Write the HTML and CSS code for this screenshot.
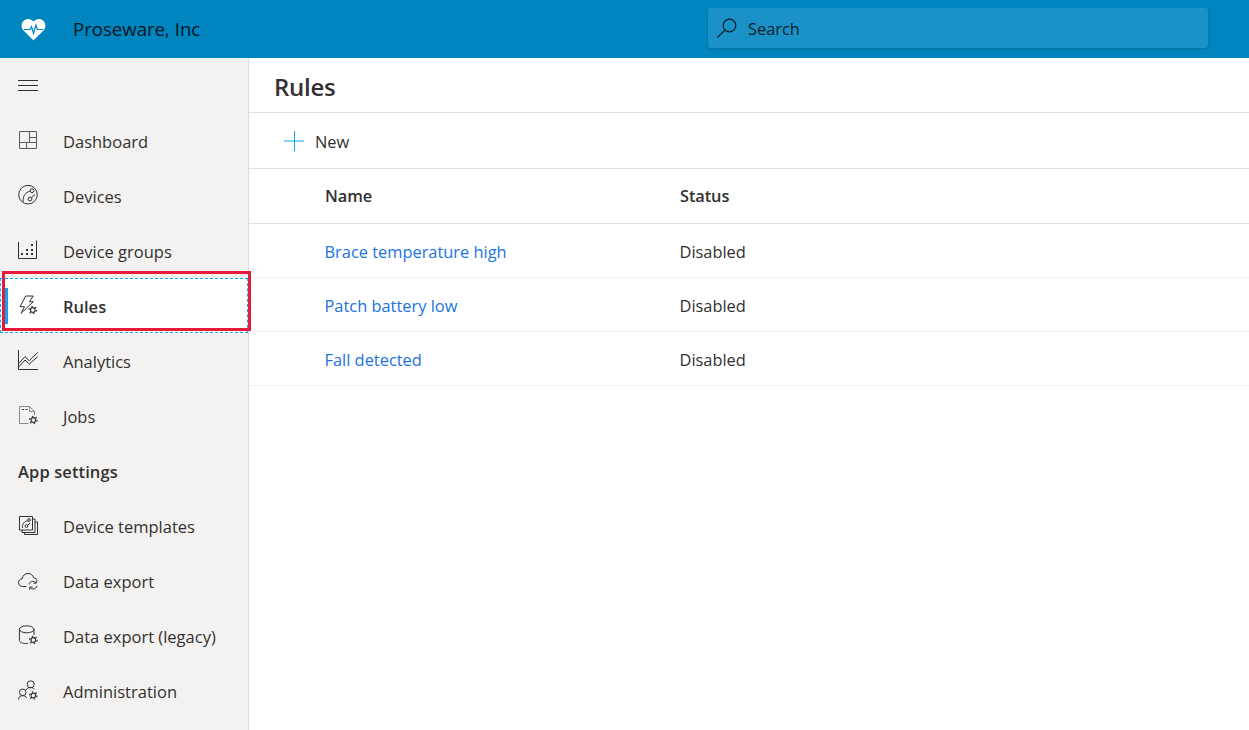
FILE: index.html
```html
<!DOCTYPE html>
<html lang="en">
<head>
  <meta charset="UTF-8">
  <meta name="viewport" content="width=device-width, initial-scale=1.0">
  <title>Rules - Proseware, Inc</title>
  <link rel="stylesheet" href="styles.css">
</head>
<body>
<svg class="defs" width="0" height="0">
  <defs>
    <g id="gear">
      <circle r="2.300" fill="none" stroke="#323130" stroke-width="1.200"/>
      <circle r="3.700" fill="none" stroke="#323130" stroke-width="1.300" stroke-dasharray="1.500 2.374"/>
    </g>
  </defs>
</svg>
<header class="topbar">
  <div class="brand">
    <svg class="brand-logo" viewBox="0 0 26 24">
      <path d="M13 23.500 2.600 13C-.4 9.800.2 5.300 2.800 2.900 5.900.1 10.600.6 13 4c2.400-3.400 7.100-3.900 10.200-1.100 2.600 2.400 3.200 6.900.2 10.100z" fill="#fff"/>
      <path d="M3 12h6.500l1.500-3 2 7 2.500-8.500 1.500 4.500h6" fill="none" stroke="#0085bf" stroke-width="1.300"/>
    </svg>
    <span class="brand-name">Proseware, Inc</span>
  </div>
  <div class="search">
    <svg class="search-icon" viewBox="0 0 20 20">
      <circle cx="12.500" cy="7.500" r="6.300" fill="none" stroke="#10222c" stroke-width="1.200"/>
      <path d="M8 12 .5 19.500" fill="none" stroke="#10222c" stroke-width="1.200"/>
    </svg>
    <span>Search</span>
  </div>
</header>

<div class="layout">
  <nav class="sidebar">
    <div class="nav-row">
      <svg class="nav-icon" viewBox="0 0 20 20"><path d="M0 5.500h20M0 10.500h20M0 15.500h20" stroke="#323130" fill="none"/></svg>
    </div>
    <a class="nav-row">
      <svg class="nav-icon" viewBox="0 0 20 20"><path d="M1.500 1.500h17v17h-17zM11.500 1.500v11M11.500 7.500h7M1.500 12.500h17M8.500 12.500v6" fill="none" stroke="#605e5c"/></svg>
      <span>Dashboard</span>
    </a>
    <a class="nav-row">
      <svg class="nav-icon" viewBox="0 0 20 20"><circle cx="10" cy="9.700" r="9.300" fill="none" stroke="#323130"/><circle cx="14" cy="5.700" r="1.900" fill="none" stroke="#323130"/><circle cx="12" cy="14" r="1.900" fill="none" stroke="#323130"/><path d="M12.200 6C7.500 7.500 4.800 10.500 5.300 16.500M13.500 12.500l3.500-3" fill="none" stroke="#323130"/></svg>
      <span>Devices</span>
    </a>
    <a class="nav-row">
      <svg class="nav-icon" viewBox="0 0 20 20"><path d="M.5 2v16.500h18V.5" fill="none" stroke="#323130"/><path d="M3 13h2v2H3zM8 13h2v2H8zM13 13h2v2h-2zM8 9h2v2H8zM13 9h2v2h-2zM13 4h2v2h-2z" fill="#323130"/></svg>
      <span>Device groups</span>
    </a>
    <a class="nav-row is-active">
      <svg class="nav-icon" viewBox="0 0 20 20"><path d="M7.700 1h7.600l-4 5.700h4L3 18.300l3.500-6.600H2z" fill="none" stroke="#323130"/><use href="#gear" x="14.800" y="15"/></svg>
      <span>Rules</span>
    </a>
    <a class="nav-row">
      <svg class="nav-icon" viewBox="0 0 20 20"><path d="M.5 0v19.500h19.500" fill="none" stroke="#323130"/><path d="M1 13.300 7 6.700l4.300 4L19.700 2.300M1 16.700 7 10l4.300 4 8.400-7.300" fill="none" stroke="#323130"/></svg>
      <span>Analytics</span>
    </a>
    <a class="nav-row">
      <svg class="nav-icon" viewBox="0 0 20 20"><path d="M10.500 18.500h-9v-17h10l5 5v3.500M11.500 1.500v5h5" fill="none" stroke="#8a8886"/><path d="M4 4.500h2M7.500 4.500h2" stroke="#323130" fill="none"/><use href="#gear" x="15.300" y="15"/></svg>
      <span>Jobs</span>
    </a>
    <div class="nav-row nav-heading">App settings</div>
    <a class="nav-row">
      <svg class="nav-icon" viewBox="0 0 20 20"><path d="M1.500 1.500h13v13.500h-13zM14.500 4H17v13.500H4V15M17 7h2.500v12.500h-13v-2" fill="none" stroke="#323130"/><circle cx="11" cy="5" r="1.400" fill="none" stroke="#323130"/><circle cx="8.500" cy="11" r="1.400" fill="none" stroke="#323130"/><path d="M10 5.500C6 6.500 4 9 4.500 13M9.800 10l2.200-2" fill="none" stroke="#323130"/></svg>
      <span>Device templates</span>
    </a>
    <a class="nav-row">
      <svg class="nav-icon" viewBox="0 0 20 20"><path d="M8.500 16.500H4.500C2 16.500.5 14.500.5 12.500S2 9 4 9c.5-3.400 3-5.500 6-5.500 2.800 0 5 1.700 5.800 4.500 1.500.2 2.900.9 3.600 2.300" fill="none" stroke="#323130"/><path d="M11 14.500c.3-2 1.900-3.200 3.800-3.200 1.300 0 2.300.5 3 1.400M19 15.800c-.3 2-1.900 3.200-3.800 3.200-1.300 0-2.300-.5-3-1.400" fill="none" stroke="#323130"/><path d="M18.300 10.500v2.700h-2.800M11.700 19.800v-2.700h2.800" fill="none" stroke="#323130"/></svg>
      <span>Data export</span>
    </a>
    <a class="nav-row">
      <svg class="nav-icon" viewBox="0 0 20 20"><ellipse cx="8.700" cy="4.300" rx="7.300" ry="3.500" fill="none" stroke="#323130"/><path d="M1.400 4.300v11.200c0 1.900 2.800 3 6.800 3h1.800M16 4.300V10" fill="none" stroke="#323130"/><use href="#gear" x="15.300" y="15"/></svg>
      <span>Data export (legacy)</span>
    </a>
    <a class="nav-row">
      <svg class="nav-icon" viewBox="0 0 20 20"><circle cx="12.700" cy="4.300" r="3.500" fill="none" stroke="#323130"/><circle cx="4.700" cy="12.300" r="3.300" fill="none" stroke="#323130"/><path d="M.5 19.500c0-2.500 1.800-3.800 4.200-3.800 2 0 3.300.8 4 2.200M8 10c.8-1.600 2.500-2.500 4.700-2.500 1.700 0 3 .6 3.800 1.800" fill="none" stroke="#323130"/><use href="#gear" x="15.300" y="15.500"/></svg>
      <span>Administration</span>
    </a>
  </nav>

  <main class="content">
    <h1 class="page-title">Rules</h1>
    <div class="toolbar">
      <button class="new-btn">
        <svg class="plus-icon" viewBox="0 0 20 20"><path d="M10.500 0v20M0 10h20" stroke="#0ea5f5" fill="none"/></svg>
        <span>New</span>
      </button>
    </div>
    <div class="table">
      <div class="table-row table-head"><span>Name</span><span>Status</span></div>
      <div class="table-row"><a>Brace temperature high</a><span>Disabled</span></div>
      <div class="table-row"><a>Patch battery low</a><span>Disabled</span></div>
      <div class="table-row"><a>Fall detected</a><span>Disabled</span></div>
    </div>
  </main>
</div>
<div class="highlight"></div>
</body>
</html>
```

FILE: styles.css
```css
body {
  font-family: "Open Sans", "Noto Sans", Arial, sans-serif;
  margin: 0;
  padding: 0;
  height: 730px;
  overflow: hidden;
  background-color: white;
  color: #323130;
  font-size: 16.4px;
}
.defs {
  position: absolute;
}
.topbar {
  height: 58px;
  background-color: #0085bf;
  position: relative;
}
.brand {
  display: flex;
  align-items: center;
  height: 58px;
  padding-left: 21px;
}
.brand-logo {
  width: 25px;
  height: 23px;
}
.brand-name {
  margin-left: 27px;
  padding-bottom: 2px;
  font-size: 18.6px;
  font-weight: 500;
  color: #03141e;
}
.search {
  position: absolute;
  left: 708px;
  top: 8px;
  width: 500px;
  height: 40px;
  display: flex;
  align-items: center;
  background-color: #1a91c7;
  border-radius: 3px;
  box-shadow: 0 1px 3px rgba(0, 0, 0, 0.2);
  color: #0b1f2a;
}
.search-icon {
  width: 20px;
  height: 20px;
  margin: 0 11px 0 9px;
}
.layout {
  display: flex;
  height: 672px;
}
.sidebar {
  width: 248px;
  background-color: #f3f2f1;
  border-right: 1px solid #dcdcdc;
  font-size: 16.5px;
}
.nav-row {
  display: flex;
  align-items: center;
  height: 55px;
  padding-left: 18px;
  box-sizing: border-box;
  color: #323130;
  position: relative;
}
.nav-row span {
  padding-top: 2px;
}
.nav-icon {
  width: 20px;
  height: 20px;
  margin-right: 25px;
  flex-shrink: 0;
  position: relative;
  top: -0.5px;
}
.nav-heading {
  padding-top: 2px;
  font-weight: 600;
  letter-spacing: 0.1px;
}
.is-active {
  background-color: white;
  font-weight: 600;
  outline: 1px dashed #0ea5f5;
  outline-offset: -1px;
}
.is-active::before {
  content: "";
  position: absolute;
  left: 5px;
  top: 10px;
  width: 3px;
  height: 36px;
  background-color: #0aa5f7;
}
.content {
  flex: 1;
}
.page-title {
  margin: 0;
  height: 54px;
  line-height: 58px;
  padding-left: 25px;
  font-size: 24px;
  font-weight: 600;
  letter-spacing: -0.25px;
  border-bottom: 1px solid #e1dfdd;
}
.toolbar {
  height: 55px;
  display: flex;
  align-items: center;
  padding-left: 35px;
  border-bottom: 1px solid #e1dfdd;
}
.new-btn {
  display: flex;
  align-items: center;
  padding: 0;
  background: none;
  border: none;
  font: inherit;
  color: #323130;
}
.new-btn span {
  padding-top: 2px;
}
.plus-icon {
  width: 20px;
  height: 20px;
  margin-right: 11px;
}
.table-row {
  display: flex;
  align-items: center;
  box-sizing: border-box;
  height: 54px;
  padding: 2px 0 0 76px;
  border-bottom: 1px solid #f3f2f1;
}
.table-row > :first-child {
  width: 355px;
}
.table-row a {
  margin-left: -0.5px;
  color: #2173e0;
}
.table-head {
  height: 55px;
  padding: 0 0 2px 76px;
  font-weight: 600;
  letter-spacing: -0.1px;
  border-bottom-color: #e1dfdd;
}
.highlight {
  position: absolute;
  left: 2px;
  top: 271px;
  width: 243px;
  height: 54px;
  border: 3px solid #e81a3b;
}
```
